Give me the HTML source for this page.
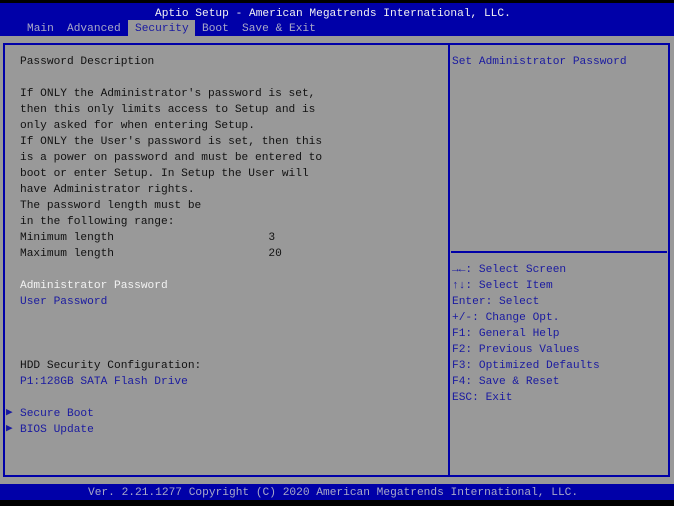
<!DOCTYPE html>
<html><head><meta charset="utf-8"><style>
html,body{margin:0;padding:0;}
body{width:674px;height:506px;background:#000;position:relative;overflow:hidden;font-family:"Liberation Mono","DejaVu Sans Mono",monospace;font-size:11.2px;}
.a{position:absolute;white-space:pre;line-height:16px;}
#top{position:absolute;left:0;top:3px;width:674px;height:33px;background:#0000a8;}
#body{position:absolute;left:0;top:36px;width:674px;height:448px;background:#999;}
#foot{position:absolute;left:0;top:484px;width:674px;height:16px;background:#0000a8;}
.box{position:absolute;border:2px solid #0000a8;box-sizing:border-box;}
.k{color:#111;}
.b{color:#1a1aa0;}
.w{color:#f2f2f2;}
.t{color:#a8a8c8;}
</style></head><body>
<div id="top"></div>
<div id="body"></div>
<div id="foot"></div>
<div class="box" style="left:3px;top:43px;width:447px;height:434px;"></div>
<div class="box" style="left:448px;top:43px;width:222px;height:434px;"></div>
<div style="position:absolute;left:451px;top:251px;width:216px;height:2px;background:#0000a8;"></div>
<div style="position:absolute;left:128px;top:20px;width:67px;height:16px;background:#999;"></div>
<div class="a w" style="left:155px;top:6px;">Aptio Setup - American Megatrends International, LLC.</div>
<div class="a t" style="left:27px;top:21px;">Main</div>
<div class="a t" style="left:67px;top:21px;">Advanced</div>
<div class="a b" style="left:135px;top:21px;">Security</div>
<div class="a t" style="left:202px;top:21px;">Boot</div>
<div class="a t" style="left:242px;top:21px;">Save &amp; Exit</div>
<div class="a k" style="left:20px;top:54px;">Password Description

If ONLY the Administrator's password is set,
then this only limits access to Setup and is
only asked for when entering Setup.
If ONLY the User's password is set, then this
is a power on password and must be entered to
boot or enter Setup. In Setup the User will
have Administrator rights.
The password length must be
in the following range:
Minimum length                       3
Maximum length                       20</div>
<div class="a w" style="left:20px;top:278px;">Administrator Password</div>
<div class="a b" style="left:20px;top:294px;">User Password</div>
<div class="a k" style="left:20px;top:358px;">HDD Security Configuration:</div>
<div class="a b" style="left:20px;top:374px;">P1:128GB SATA Flash Drive</div>
<div class="a b" style="left:6px;top:405px;font-size:11px;">&#9654;</div>
<div class="a b" style="left:6px;top:421px;font-size:11px;">&#9654;</div>
<div class="a b" style="left:20px;top:406px;">Secure Boot</div>
<div class="a b" style="left:20px;top:422px;">BIOS Update</div>
<div class="a b" style="left:452px;top:54px;">Set Administrator Password</div>
<div class="a b" style="left:452px;top:262px;">&#8594;&#8592;: Select Screen
&#8593;&#8595;: Select Item
Enter: Select
+/-: Change Opt.
F1: General Help
F2: Previous Values
F3: Optimized Defaults
F4: Save &amp; Reset
ESC: Exit</div>
<div class="a t" style="left:88px;top:485px;">Ver. 2.21.1277 Copyright (C) 2020 American Megatrends International, LLC.</div>
</body></html>
